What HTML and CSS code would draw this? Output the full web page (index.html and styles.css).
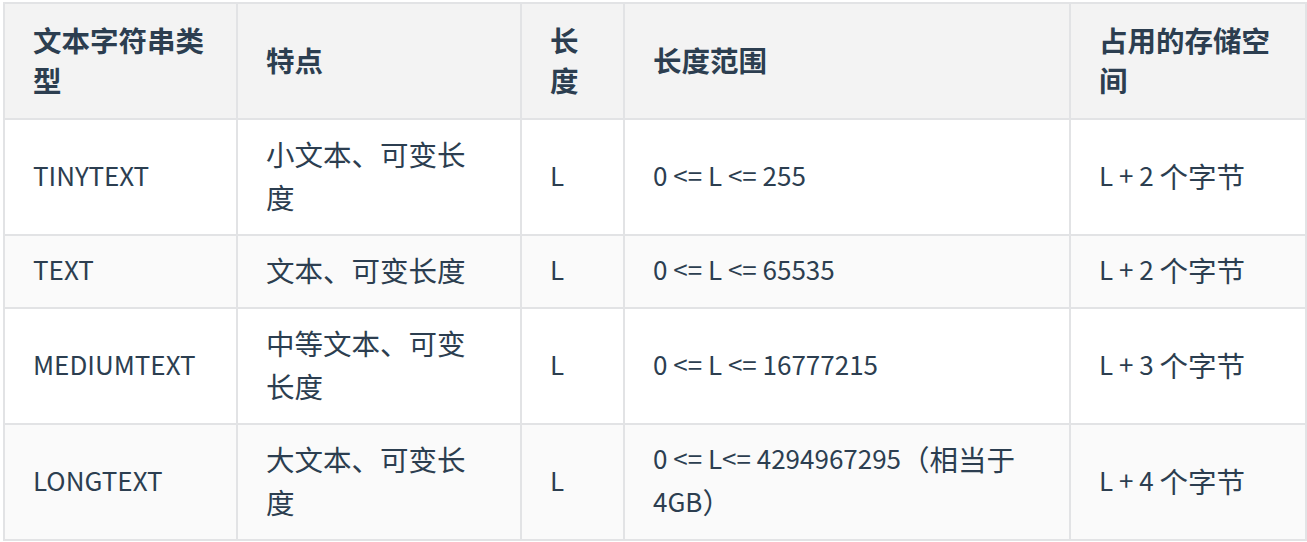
FILE: index.html
```html
<!DOCTYPE html>
<html lang="zh-CN">
<head>
<meta charset="utf-8">
<link rel="stylesheet" href="styles.css">
</head>
<body>
<table class="tbl">
  <colgroup>
    <col class="c1"><col class="c2"><col class="c3"><col class="c4"><col class="c5">
  </colgroup>
  <thead>
    <tr>
      <th>文本字符串类型</th>
      <th>特点</th>
      <th>长度</th>
      <th>长度范围</th>
      <th>占用的存储空间</th>
    </tr>
  </thead>
  <tbody>
    <tr>
      <td><span class="en">TINYTEXT</span></td>
      <td>小文本、可变长度</td>
      <td><span class="en">L</span></td>
      <td><span class="en">0 &lt;= L &lt;= 255</span></td>
      <td><span class="en">L + 2 </span>个字节</td>
    </tr>
    <tr>
      <td><span class="en">TEXT</span></td>
      <td>文本、可变长度</td>
      <td><span class="en">L</span></td>
      <td><span class="en">0 &lt;= L &lt;= 65535</span></td>
      <td><span class="en">L + 2 </span>个字节</td>
    </tr>
    <tr>
      <td><span class="en">MEDIUMTEXT</span></td>
      <td>中等文本、可变长度</td>
      <td><span class="en">L</span></td>
      <td><span class="en">0 &lt;= L &lt;= 16777215</span></td>
      <td><span class="en">L + 3 </span>个字节</td>
    </tr>
    <tr>
      <td><span class="en">LONGTEXT</span></td>
      <td>大文本、可变长度</td>
      <td><span class="en">L</span></td>
      <td><span class="en">0 &lt;= L&lt;= 4294967295</span>（相当于<span class="en">4GB</span>）</td>
      <td><span class="en">L + 4 </span>个字节</td>
    </tr>
  </tbody>
</table>
</body>
</html>
```
FILE: styles.css
```css
html, body {
  margin: 0;
  padding: 0;
  background: #ffffff;
}
body {
  padding: 2px 0 0 3px;
  font-family: "Noto Sans CJK SC", "Noto Sans", sans-serif;
  color: #2c3e50;
}
.tbl {
  border-collapse: collapse;
  table-layout: fixed;
  width: 1302px;
  font-size: 28.5px;
  line-height: 43px;
}
.c1 { width: 233px; }
.c2 { width: 284px; }
.c3 { width: 103px; }
.c4 { width: 446px; }
.c5 { width: 236px; }
.tbl th,
.tbl td {
  border: 2px solid #e2e3e5;
  padding: 12px 28px 16px;
  text-align: left;
  vertical-align: middle;
}
.tbl th {
  background: #f3f3f3;
  font-weight: 700;
  line-height: 40px;
  padding: 16px 28px 18px;
}
.tbl tbody tr:nth-child(2n) {
  background: #fafafa;
}
.en {
  font-size: 26px;
  line-height: 1;
  vertical-align: 2px;
}
```
